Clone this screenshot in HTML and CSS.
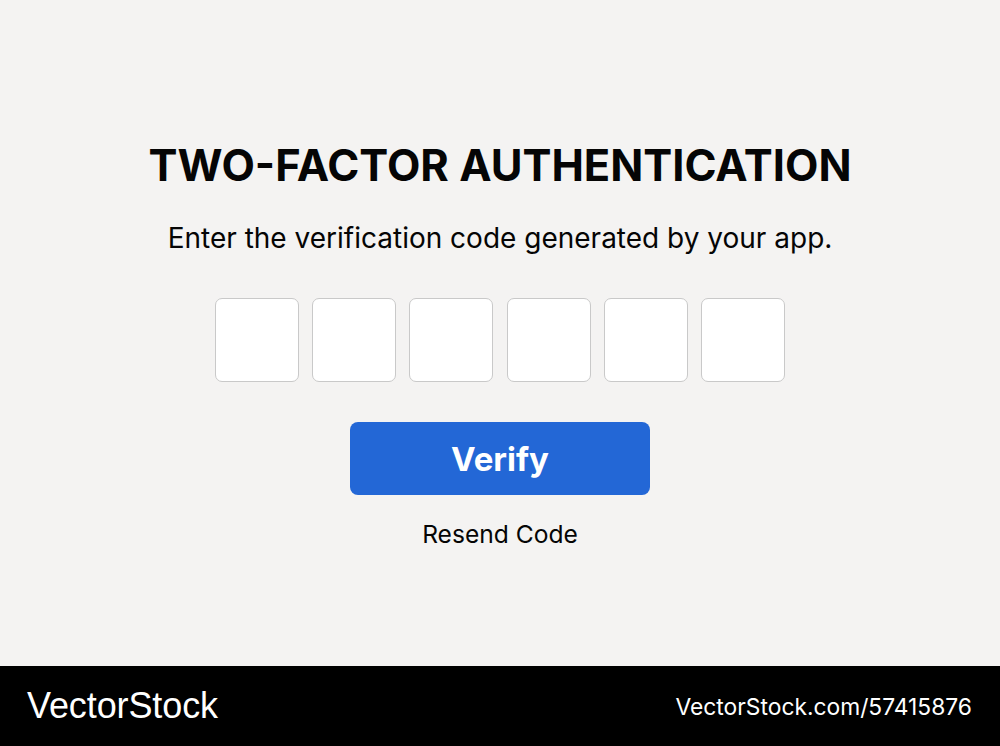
FILE: index.html
```html
<!DOCTYPE html>
<html>
<head>
    <meta charset="utf-8">
    <title>Two-Factor Authentication</title>
    <link rel="stylesheet" href="styles.css">
</head>
<body>
    <div class="page">
        <div class="card">
            <h1 class="title">TWO-FACTOR AUTHENTICATION</h1>
            <p class="subtitle">Enter the verification code generated by your app.</p>
            <div class="code-row">
                <input class="digit" type="text" maxlength="1">
                <input class="digit" type="text" maxlength="1">
                <input class="digit" type="text" maxlength="1">
                <input class="digit" type="text" maxlength="1">
                <input class="digit" type="text" maxlength="1">
                <input class="digit" type="text" maxlength="1">
            </div>
            <button class="verify">Verify</button>
            <a class="resend" href="#">Resend Code</a>
        </div>
    </div>
    <div class="footer">
        <span class="brand">VectorStock</span>
        <span class="ref">VectorStock.com/57415876</span>
    </div>
</body>
</html>
```

FILE: styles.css
```css
html, body {
    margin: 0;
    padding: 0;
}

body {
    width: 1000px;
    height: 746px;
    background: #f4f3f2;
    font-family: Inter, "Noto Sans", sans-serif;
    color: #050505;
    display: flex;
    flex-direction: column;
    overflow: hidden;
}

.page {
    height: 666px;
    display: flex;
    justify-content: center;
}

.card {
    display: flex;
    flex-direction: column;
    align-items: center;
    padding-top: 138px;
}

.title {
    margin: 0;
    font-size: 43.4px;
    font-weight: 700;
    line-height: 54px;
}

.subtitle {
    margin: 28px 0 0 0;
    font-size: 28px;
    line-height: 36px;
}

.code-row {
    display: flex;
    gap: 13.2px;
    margin-top: 42px;
}

.digit {
    width: 84px;
    height: 84px;
    box-sizing: border-box;
    border: 1.5px solid #c9c9c9;
    border-radius: 7px;
    background: #fff;
    outline: none;
}

.verify {
    margin-top: 40px;
    width: 300px;
    height: 73px;
    border: none;
    border-radius: 8px;
    background: #2367d6;
    color: #fff;
    font-family: Inter, "Noto Sans", sans-serif;
    font-size: 33px;
    font-weight: 700;
}

.resend {
    margin-top: 23px;
    font-size: 24.6px;
    line-height: 32px;
    color: #050505;
    text-decoration: none;
}

.footer {
    height: 80px;
    background: #000;
    color: #fff;
    display: flex;
    align-items: center;
    justify-content: space-between;
    padding: 0 28px 0 27px;
}

.brand {
    font-family: "Liberation Sans", Arial, sans-serif;
    font-size: 36px;
    letter-spacing: -0.1px;
}

.ref {
    font-family: Inter, "Noto Sans", sans-serif;
    font-size: 22.8px;
}
```
